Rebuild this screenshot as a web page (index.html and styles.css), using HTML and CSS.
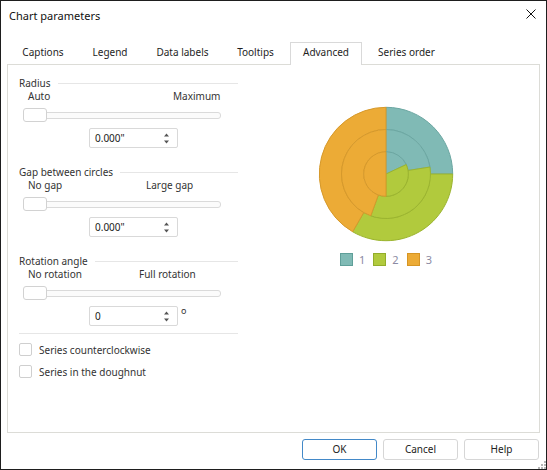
FILE: index.html
```html
<!DOCTYPE html>
<html>
<head>
<meta charset="utf-8">
<title>Chart parameters</title>
<link rel="stylesheet" href="styles.css">
</head>
<body>
<div class="window">
  <div class="titlebar">
    <span class="title">Chart parameters</span>
    <svg class="close" width="10" height="10" viewBox="0 0 10 10"><path d="M0.5 0.5L9.5 9.5M9.5 0.5L0.5 9.5" stroke="#111" stroke-width="1"/></svg>
  </div>
  <div class="tabs">
    <div class="tab w-captions">Captions</div>
    <div class="tab w-legend">Legend</div>
    <div class="tab w-datalabels">Data labels</div>
    <div class="tab w-tooltips">Tooltips</div>
    <div class="tab w-advanced active">Advanced</div>
    <div class="tab w-series">Series order</div>
  </div>
  <div class="panel">
    <div class="left">
      <div class="group">
        <div class="group-title"><span>Radius</span><i class="rule"></i></div>
        <div class="range-labels"><span class="start s-radius">Auto</span><span>Maximum</span></div>
        <div class="slider"><div class="track"></div><div class="thumb"></div></div>
        <div class="spin-row">
          <div class="spin"><span>0.000"</span><svg class="arrows" width="5" height="11" viewBox="0 0 5 11"><path d="M0 3.5L2.5 0.5L5 3.5Z M0 7.5L5 7.5L2.5 10.5Z" fill="#555"/></svg></div>
        </div>
      </div>
      <div class="group">
        <div class="group-title"><span>Gap between circles</span><i class="rule"></i></div>
        <div class="range-labels"><span class="start s-gap">No gap</span><span>Large gap</span></div>
        <div class="slider"><div class="track"></div><div class="thumb"></div></div>
        <div class="spin-row">
          <div class="spin"><span>0.000"</span><svg class="arrows" width="5" height="11" viewBox="0 0 5 11"><path d="M0 3.5L2.5 0.5L5 3.5Z M0 7.5L5 7.5L2.5 10.5Z" fill="#555"/></svg></div>
        </div>
      </div>
      <div class="group">
        <div class="group-title"><span>Rotation angle</span><i class="rule"></i></div>
        <div class="range-labels"><span class="start s-rot">No rotation</span><span>Full rotation</span></div>
        <div class="slider"><div class="track"></div><div class="thumb"></div></div>
        <div class="spin-row">
          <div class="spin"><span>0</span><svg class="arrows" width="5" height="11" viewBox="0 0 5 11"><path d="M0 3.5L2.5 0.5L5 3.5Z M0 7.5L5 7.5L2.5 10.5Z" fill="#555"/></svg></div>
          <span class="deg">o</span>
        </div>
      </div>
      <div class="separator"></div>
      <div class="check"><span class="box"></span><span>Series counterclockwise</span></div>
      <div class="check second"><span class="box"></span><span>Series in the doughnut</span></div>
    </div>
    <div class="right">
      <svg class="chart" width="140" height="140" viewBox="-70 -70 140 140">
        <g stroke-width="1" stroke-linejoin="round">
          <path class="teal" d="M0,-66.7 A66.7,66.7 0 0 1 66.7,0 L44.5,0 A44.5,44.5 0 0 0 0,-44.5 Z"/>
          <path class="green" d="M66.7,0 A66.7,66.7 0 0 1 -33.35,57.76 L-22.25,38.54 A44.5,44.5 0 0 0 44.5,0 Z"/>
          <path class="orange" d="M-33.35,57.76 A66.7,66.7 0 0 1 0,-66.7 L0,-44.5 A44.5,44.5 0 0 0 -22.25,38.54 Z"/>
          <path class="teal" d="M0,-44.5 A44.5,44.5 0 0 1 43.95,-6.96 L22.03,-3.49 A22.3,22.3 0 0 0 0,-22.3 Z"/>
          <path class="green" d="M43.95,-6.96 A44.5,44.5 0 0 1 -15.22,41.82 L-7.63,20.96 A22.3,22.3 0 0 0 22.03,-3.49 Z"/>
          <path class="orange" d="M-15.22,41.82 A44.5,44.5 0 0 1 0,-44.5 L0,-22.3 A22.3,22.3 0 0 0 -7.63,20.96 Z"/>
          <path class="teal" d="M0,0 L0,-22.3 A22.3,22.3 0 0 1 20.21,-9.42 Z"/>
          <path class="green" d="M0,0 L20.21,-9.42 A22.3,22.3 0 0 1 0,22.3 Z"/>
          <path class="orange" d="M0,0 L0,22.3 A22.3,22.3 0 0 1 0,-22.3 Z"/>
        </g>
      </svg>
      <div class="legend">
        <div class="item"><span class="sw sw-teal"></span><span>1</span></div>
        <div class="item"><span class="sw sw-green"></span><span>2</span></div>
        <div class="item"><span class="sw sw-orange"></span><span>3</span></div>
      </div>
    </div>
  </div>
  <div class="footer">
    <div class="btn default">OK</div>
    <div class="btn">Cancel</div>
    <div class="btn">Help</div>
  </div>
  <svg class="grip" width="8" height="8" viewBox="0 0 8 8">
    <rect x="6" y="0" width="2" height="2" fill="#b5b5b5"/>
    <rect x="3" y="3" width="2" height="2" fill="#b5b5b5"/>
    <rect x="6" y="3" width="2" height="2" fill="#b5b5b5"/>
    <rect x="0" y="6" width="2" height="2" fill="#b5b5b5"/>
    <rect x="3" y="6" width="2" height="2" fill="#b5b5b5"/>
    <rect x="6" y="6" width="2" height="2" fill="#b5b5b5"/>
  </svg>
</div>
</body>
</html>
```

FILE: styles.css
```css
* { box-sizing: border-box; }
html, body { margin: 0; padding: 0; background: #fff; }
body {
  font-family: "Noto Sans", "Open Sans", sans-serif;
  font-size: 10px;
  color: #2a2a2a;
}
.window {
  position: relative;
  width: 547px;
  height: 470px;
  border: 1px solid #1e1e1e;
  background: #fff;
  display: flex;
  flex-direction: column;
}
.titlebar {
  height: 30px;
  display: flex;
  align-items: center;
  justify-content: space-between;
  padding-left: 8px;
}
.title { font-size: 11px; color: #111; line-height: 16px; margin-top: -1px; }
.close { align-self: flex-start; margin-top: 8px; margin-right: 10px; }

.tabs {
  display: flex;
  gap: 4px;
  padding-left: 9px;
  margin-top: 11px;
  height: 22px;
  position: relative;
  z-index: 2;
}
.tab {
  height: 23px;
  line-height: 19px;
  border: 1px solid transparent;
  border-bottom: 0;
  text-align: center;
  color: #1e1e1e;
  background: transparent;
}
.tab.active {
  border-color: #d9d9d9;
  background: #fff;
}
.w-captions { width: 66px; }
.w-legend { width: 60px; }
.w-datalabels { width: 77px; }
.w-tooltips { width: 61px; }
.w-advanced { width: 72px; }
.w-series { width: 81px; }

.panel {
  margin: 0 6px;
  height: 369px;
  border: 1px solid #dcdcd7;
  display: flex;
}
.left {
  width: 230px;
  padding-left: 11px;
  padding-top: 10px;
  display: flex;
  flex-direction: column;
}
.group + .group { margin-top: 16px; }
.group-title {
  display: flex;
  align-items: center;
  line-height: 16px;
  color: #333;
}
.rule {
  flex: 1;
  height: 1px;
  background: #e6e6e6;
  margin-left: 7px;
}
.range-labels {
  display: flex;
  line-height: 16px;
  margin-top: -3px;
  padding-left: 9px;
  color: #333;
}
.s-radius { width: 145px; }
.s-gap { width: 118px; }
.s-rot { width: 111px; }

.slider {
  position: relative;
  margin-top: 4px;
  margin-left: 4px;
  width: 198px;
  height: 14px;
  display: flex;
  align-items: center;
}
.track {
  flex: 1;
  height: 7px;
  border: 1px solid #dadada;
  border-radius: 3px;
  background: #fbfbfb;
}
.thumb {
  position: absolute;
  left: 0;
  top: 0;
  width: 24px;
  height: 14px;
  border: 1px solid #d2d2d2;
  border-radius: 3px;
  background: #fff;
}
.spin-row {
  display: flex;
  align-items: flex-start;
  margin-top: 6px;
  margin-left: 70px;
}
.spin {
  width: 89px;
  height: 20px;
  border: 1px solid #d9d9d9;
  border-radius: 2px;
  display: flex;
  align-items: center;
  justify-content: space-between;
  padding: 0 8px 0 5px;
  color: #222;
}
.deg {
  font-size: 9px;
  line-height: 10px;
  margin-left: 3px;
  color: #333;
}
.separator {
  height: 1px;
  background: #e6e6e6;
  margin-top: 7px;
}
.check {
  display: flex;
  align-items: center;
  gap: 7px;
  height: 13px;
  margin-top: 9px;
  color: #333;
}
.check.second { margin-top: 9px; }
.box {
  width: 13px;
  height: 13px;
  border: 1px solid #cfcfcf;
  border-radius: 2px;
  background: #fff;
}

.right {
  flex: 1;
  padding-top: 39px;
  padding-right: 5px;
  display: flex;
  flex-direction: column;
  align-items: center;
}
.chart { display: block; }
.teal { fill: #80bab5; stroke: #6ca7a2; }
.green { fill: #b1ca3d; stroke: #9bb42f; }
.orange { fill: #ecab36; stroke: #d6992b; }
.legend {
  display: flex;
  gap: 8px;
  margin-top: 9px;
  font-size: 11px;
  color: #8b8ba3;
}
.item {
  display: flex;
  align-items: center;
  gap: 6px;
  height: 13px;
}
.sw {
  width: 13px;
  height: 13px;
  border: 1px solid;
}
.sw-teal { background: #80bab5; border-color: #5f9f99; }
.sw-green { background: #b1ca3d; border-color: #93ad2a; }
.sw-orange { background: #ecab36; border-color: #d69524; }

.footer {
  display: flex;
  justify-content: flex-end;
  gap: 6px;
  margin-top: 6px;
  padding-right: 7px;
}
.btn {
  width: 75px;
  height: 21px;
  border: 1px solid #d6d6d6;
  border-radius: 3px;
  text-align: center;
  line-height: 19px;
  color: #222;
  background: #fff;
}
.btn.default { border-color: #4389c8; }
.grip {
  position: absolute;
  right: 0;
  bottom: 0;
}
```
